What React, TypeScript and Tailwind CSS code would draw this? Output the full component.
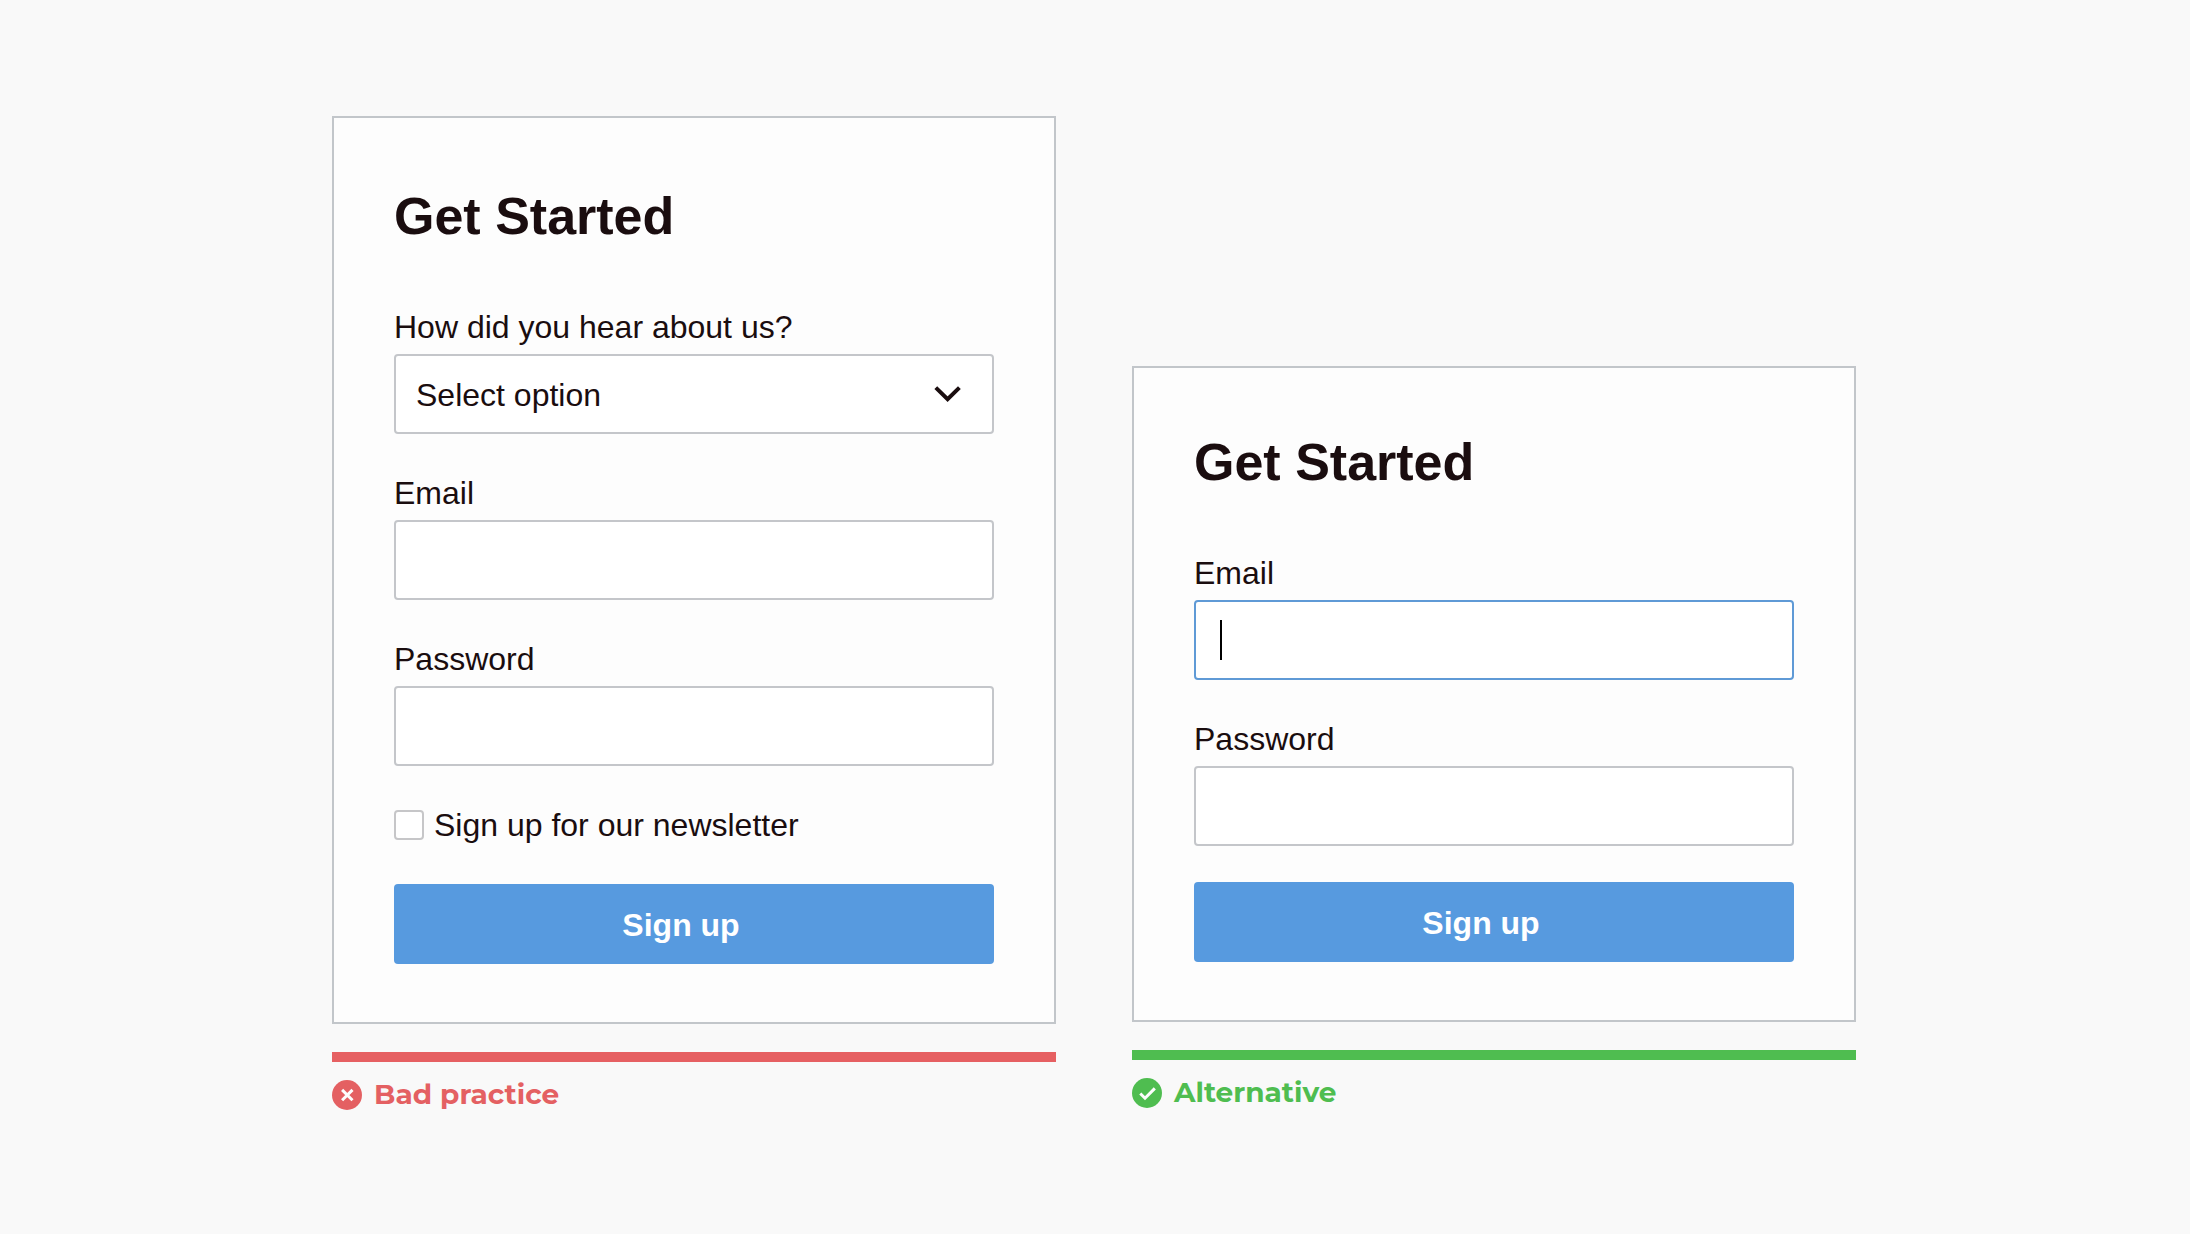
import { useId, type ReactNode } from "react";

const controlClass =
  "block h-20 w-full rounded-sm border-2 bg-white px-5 text-[32px] leading-[38px] text-[#1a0d0f] outline-none";

function Field({
  label,
  type,
  focused = false,
}: {
  label: string;
  type: string;
  focused?: boolean;
}) {
  const id = useId();
  return (
    <div className="flex flex-col gap-2">
      <label htmlFor={id}>{label}</label>
      <div className="relative">
        <input
          id={id}
          type={type}
          className={`${controlClass} ${focused ? "border-[#5f9ad6]" : "border-[#c4c6ca]"}`}
        />
        {focused && (
          <span className="pointer-events-none absolute top-5 left-[26px] h-10 w-0.5 bg-black" />
        )}
      </div>
    </div>
  );
}

function SelectField({ label, option }: { label: string; option: string }) {
  const id = useId();
  return (
    <div className="flex flex-col gap-2">
      <label htmlFor={id}>{label}</label>
      <div className="relative">
        <select id={id} className={`${controlClass} appearance-none border-[#c4c6ca] pt-0.5`}>
          <option>{option}</option>
        </select>
        <svg
          viewBox="0 0 28 18"
          className="pointer-events-none absolute top-[31px] right-8 h-[18px] w-7"
          fill="none"
          stroke="#1a0d0f"
          strokeWidth="4"
        >
          <path d="M1.8 2.6 13.6 14.2 25.4 2.6" />
        </svg>
      </div>
    </div>
  );
}

function Checkbox({ label }: { label: string }) {
  const id = useId();
  return (
    <div className="flex items-center gap-2.5">
      <input
        id={id}
        type="checkbox"
        className="size-[30px] appearance-none rounded-sm border-2 border-[#c6c6c8] bg-white checked:bg-[#579adf]"
      />
      <label htmlFor={id}>{label}</label>
    </div>
  );
}

function SubmitButton() {
  return (
    <button
      type="submit"
      className="h-20 w-full rounded-sm bg-[#579adf] pt-0.5 pr-[26px] font-bold text-white"
    >
      Sign up
    </button>
  );
}

function Card({ className, children }: { className: string; children: ReactNode }) {
  return (
    <form
      onSubmit={(e) => e.preventDefault()}
      className={`border-2 border-[#c2c6ca] bg-[#fdfdfd] px-[60px] pb-[58px] text-[32px] leading-[38px] text-[#1a0d0f] ${className}`}
    >
      <h2 className="mb-[62px] text-[52px] leading-[60px] font-bold">Get Started</h2>
      {children}
    </form>
  );
}

function Verdict({
  text,
  textClass,
  barClass,
  children,
}: {
  text: string;
  textClass: string;
  barClass: string;
  children: ReactNode;
}) {
  return (
    <figcaption className={textClass}>
      <div className={`mt-7 mb-[18px] h-2.5 ${barClass}`} />
      <div className="flex h-[30px] items-center gap-3">
        <svg viewBox="0 0 30 30" className="size-[30px] shrink-0">
          <circle cx="15" cy="15" r="15" fill="currentColor" />
          {children}
        </svg>
        <span className="pb-0.5 font-['Montserrat','Inter',sans-serif] text-[28px] leading-7 font-bold">
          {text}
        </span>
      </div>
    </figcaption>
  );
}

export default function App() {
  return (
    <main className="flex min-h-screen items-start justify-center bg-[#f9f9f9] px-8 pt-[116px] pb-[124px] font-['Liberation_Sans',Arial,sans-serif]">
      <div className="flex w-full max-w-[1526px] items-end gap-[76px] pr-0.5">
        <figure className="min-w-0 flex-1">
          <Card className="pt-[68px]">
            <div className="flex flex-col gap-10">
              <SelectField label="How did you hear about us?" option="Select option" />
              <Field label="Email" type="email" />
              <Field label="Password" type="password" />
              <Checkbox label="Sign up for our newsletter" />
              <SubmitButton />
            </div>
          </Card>
          <Verdict text="Bad practice" textClass="text-[#e46062]" barClass="bg-[#e66062]">
            <path
              d="M10.1 9.9 20.5 20.3M20.5 9.9 10.1 20.3"
              stroke="#fdfdfd"
              strokeWidth="3"
              fill="none"
            />
          </Verdict>
        </figure>

        <figure className="min-w-0 flex-1 pb-0.5">
          <Card className="pt-16">
            <div className="mb-9 flex flex-col gap-10">
              <Field label="Email" type="email" focused />
              <Field label="Password" type="password" />
            </div>
            <SubmitButton />
          </Card>
          <Verdict text="Alternative" textClass="text-[#4fbd50]" barClass="bg-[#4fbd50]">
            <path
              d="M8.3 15.5 13 20.2 22.8 10.4"
              stroke="#fdfdfd"
              strokeWidth="3"
              fill="none"
            />
          </Verdict>
        </figure>
      </div>
    </main>
  );
}
